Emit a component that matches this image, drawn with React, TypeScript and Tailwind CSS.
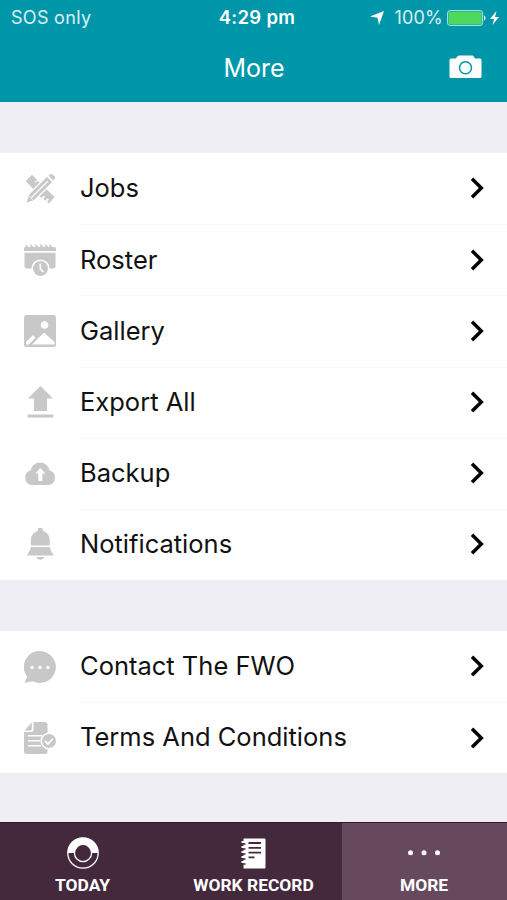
import React from 'react';

const iconClass = 'h-8 w-8 shrink-0 text-[#c8c8c8]';

function JobsIcon() {
  return (
    <svg viewBox="0 0 32 32" className={iconClass} fill="currentColor">
      <path d="M2 8 8 2l4.500 4.500-2 2 1.200 1.200 2-2L30.500 24 25 30.500l-2-2 2-2-1.300-1.300-2.500 2.500-2-2 2-2-1.200-1.200-2.500 2.500L2 8Z" />
      <path d="M2 8 8 2l5 5-1.500 1.500-1.500-1.500-1.500 1.500L10 10l-3 3-5-5Z" />
      <path d="M1.500 30.500 4.500 21.500 23 3l6 6L10.500 27.500 1.500 30.500Z" stroke="white" strokeWidth="1.300" />
      <path d="m24.500 2.700 1-1c1-1 2.400-1 3.400 0l1.400 1.400c1 1 1 2.400 0 3.400l-1 1-4.800-4.800Z" />
      <path d="M7.500 24.500 24 8" stroke="white" strokeWidth="1.100" />
      <path d="m4.500 22.500 5 5" stroke="white" strokeWidth=".800" />
    </svg>
  );
}

function RosterIcon() {
  return (
    <svg viewBox="0 0 32 32" className={iconClass} fill="currentColor">
      <path d="M0 7V4.500C0 3.500.700 3 1.500 3H2L1.500 0 4.500 3h2L6 -.500 9.500 3h2L11-.500 14.500 3h2L16-.500 19.500 3h2L21-.500 24.500 3h1L25.500-.500 28.500 3h2c.800 0 1.500.500 1.500 1.500V7H0Z" />
      <path d="M.500 8.800h31V22a2.500 2.500 0 0 1-2.500 2.500H3A2.500 2.500 0 0 1 .500 22V8.800Z" />
      <circle cx="16.500" cy="24.500" r="8.300" stroke="white" strokeWidth="1.600" />
      <path d="M16.300 19.500v5.300l3.200 3.200" fill="none" stroke="white" strokeWidth="1.600" />
    </svg>
  );
}

function GalleryIcon() {
  return (
    <svg viewBox="0 0 32 32" className={iconClass} fill="currentColor">
      <rect width="32" height="32" rx="2.500" />
      <circle cx="20.500" cy="10" r="3.800" fill="white" />
      <path d="M8 29.500 20 17.500l10.500 9.500v2.500H8ZM2 29.500V27l7-7 2.500 2.500-6.500 7H2Z" fill="white" />
    </svg>
  );
}

function ExportIcon() {
  return (
    <svg viewBox="0 0 32 32" className={iconClass} fill="currentColor">
      <path d="M16.500 0 29 12.500h-6V25H10V12.500H4L16.500 0Z" />
      <rect x="3.500" y="28.500" width="26" height="3" rx="1" />
    </svg>
  );
}

function BackupIcon() {
  return (
    <svg viewBox="0 0 32 32" className={iconClass} fill="currentColor">
      <path d="M7.500 28a7.500 7.500 0 0 1-1-14.600 9.800 9.800 0 0 1 19.200 0 7.500 7.500 0 0 1-1 14.600H7.500Z" />
      <path d="m16.300 11 5 5.500h-3V24h-4v-7.500h-3l5-5.500Z" fill="white" />
    </svg>
  );
}

function BellIcon() {
  return (
    <svg viewBox="0 0 32 32" className={iconClass} fill="currentColor">
      <path d="M6.800 17.500v-5c0-5 3-8.500 7-9.500V2a2.500 2.500 0 0 1 5 0v1c4 1 7 4.500 7 9.500v5h-19Z" />
      <path d="M6.800 19h19c.500 3 1.500 5 4 8.500h-27c2.500-3.500 3.500-5.500 4-8.500ZM12.300 29h8c-.800 1.800-2.200 2.700-4 2.700s-3.200-.900-4-2.700Z" />
    </svg>
  );
}

function ContactIcon() {
  return (
    <svg viewBox="0 0 32 32" className={iconClass} fill="currentColor">
      <path d="M16 0a16 16 0 1 1-7.500 30.200L.500 32l2.700-6.300A16 16 0 0 1 16 0Z" />
      <g fill="white">
        <circle cx="8" cy="16.500" r="1.700" />
        <circle cx="16" cy="16.500" r="1.700" />
        <circle cx="24" cy="16.500" r="1.700" />
      </g>
    </svg>
  );
}

function TermsIcon() {
  return (
    <svg viewBox="0 0 32 32" className={iconClass} fill="currentColor">
      <path d="M9.500 0H21a2.500 2.500 0 0 1 2.500 2.500v27A2.500 2.500 0 0 1 21 32H2.500A2.500 2.500 0 0 1 0 29.500V10h7a2.500 2.500 0 0 0 2.500-2.500V0ZM7.800.500v6.800c0 .700-.500 1.200-1.200 1.200H.500L7.800.500Z" />
      <path d="M4 13.700h14M4 18.700h12M4 23.700h13" stroke="white" strokeWidth="1.500" />
      <circle cx="25" cy="19" r="7.800" stroke="white" strokeWidth="1.600" />
      <path d="m21 19 3 3 5-5.500" fill="none" stroke="white" strokeWidth="1.800" />
    </svg>
  );
}

function TodayIcon() {
  return (
    <svg viewBox="0 0 32 32" className="h-8 w-8" fill="none" stroke="white">
      <circle cx="16" cy="16" r="15.200" strokeWidth="1.300" />
      <path d="M.800 16a15.200 15.200 0 0 1 30.400 0h-6.700a8.500 8.500 0 0 0-17 0H.800Z" fill="white" stroke="none" />
      <circle cx="16" cy="16" r="8.600" strokeWidth="1.300" />
    </svg>
  );
}

function RecordIcon() {
  return (
    <svg viewBox="0 0 32 32" className="h-8 w-8">
      <path d="M5.500 1.500h21a1 1 0 0 1 1 1v28a1 1 0 0 1-1 1h-21v-30Z" fill="white" />
      <path d="M10.500 6h12.500M10.500 10.800h12.500M10.500 15.600h12.500M10.500 20.400h6" stroke="#44283b" strokeWidth="1.800" />
      <path d="M3.500 5h4M3.500 10h4M3.500 15h4M3.500 20h4M3.500 25h4" stroke="white" strokeWidth="1.800" />
      <path d="M5 7h2.500M5 12h2.500M5 17h2.500M5 22h2.500M5 27h2.500" stroke="#44283b" strokeWidth="1.500" />
    </svg>
  );
}

function DotsIcon() {
  return (
    <svg viewBox="0 0 32 32" className="h-8 w-8" fill="white">
      <circle cx="2.500" cy="15.800" r="2.500" />
      <circle cx="16" cy="15.800" r="2.500" />
      <circle cx="29.500" cy="15.800" r="2.500" />
    </svg>
  );
}

const mainItems = [
  { label: 'Jobs', icon: JobsIcon },
  { label: 'Roster', icon: RosterIcon },
  { label: 'Gallery', icon: GalleryIcon },
  { label: 'Export All', icon: ExportIcon },
  { label: 'Backup', icon: BackupIcon },
  { label: 'Notifications', icon: BellIcon },
];

const infoItems = [
  { label: 'Contact The FWO', icon: ContactIcon },
  { label: 'Terms And Conditions', icon: TermsIcon },
];

const tabs = [
  { label: 'TODAY', icon: TodayIcon, active: false },
  { label: 'WORK RECORD', icon: RecordIcon, active: false },
  { label: 'MORE', icon: DotsIcon, active: true },
];

function MenuSection({ items, className }: { items: typeof mainItems; className: string }) {
  return (
    <section className={`flex shrink-0 flex-col bg-white ${className}`}>
      {items.map(({ label, icon: Icon }, i) => (
        <button key={label} type="button" className="flex min-h-0 flex-1 items-center pl-6 text-left">
          <Icon />
          <span
            className={`ml-6 flex flex-1 items-center justify-between self-stretch border-[#fafafa] pb-px pr-[23px] ${i > 0 ? 'border-t' : ''}`}
          >
            <span className="whitespace-nowrap text-[25.5px] text-[#111]">{label}</span>
            <svg viewBox="0 0 14 22" className="h-[22px] w-3.5" fill="none" stroke="black" strokeWidth="3.500">
              <path d="m2 1.700 9.300 9.300L2 20.300" />
            </svg>
          </span>
        </button>
      ))}
    </section>
  );
}

export default function App() {
  return (
    <div className="flex h-[900px] w-[507px] flex-col overflow-hidden bg-[#efeef5] font-['Inter','Liberation_Sans',sans-serif]">
      <header className="flex h-[102px] shrink-0 flex-col bg-[#0096a9] text-white">
        <div className="grid h-[35px] grid-cols-3 items-center pl-[11px] pr-2 text-[18px]">
          <span className="whitespace-nowrap tracking-[0.3px] text-white/85">SOS only</span>
          <span className="whitespace-nowrap pl-1 text-center text-[18.5px] font-semibold tracking-[0.3px]">4:29 pm</span>
          <div className="flex items-center justify-end">
            <svg viewBox="0 0 14 14" className="mr-2.5 h-3.5 w-3.5 shrink-0" fill="white">
              <path d="M14 0 9 14 7.500 6.800 0 5.500 14 0Z" />
            </svg>
            <span className="mr-1 tracking-[0.2px] text-white/85">100%</span>
            <svg viewBox="0 0 39 16" className="h-4 w-[39px] shrink-0">
              <rect x=".600" y=".600" width="35" height="14.800" rx="2.500" fill="none" stroke="#b9e4e9" strokeWidth="1" />
              <rect x="1.500" y="1.500" width="33.200" height="13" rx="1.500" fill="#4cd95f" />
              <path d="M37 5.500c2 .800 2 4.200 0 5v-5Z" fill="white" />
            </svg>
            <svg viewBox="0 0 9 14" className="ml-1 h-3.5 w-[9px] shrink-0" fill="white">
              <path d="M6.500 0 0 8h4L2.500 14 9 6H5l1.500-6Z" />
            </svg>
          </div>
        </div>
        <div className="grid flex-1 grid-cols-3 items-center pr-[25px]">
          <span />
          <h1 className="pl-[26px] text-center text-[25px]">More</h1>
          <button type="button" aria-label="Camera" className="justify-self-end pb-1">
            <svg viewBox="0 0 33 24" className="h-6 w-[33px]">
              <path d="M2 3.500h4.500c1.500-.500 1.500-3 3.500-3h13c2 0 2 2.500 3.500 3H31a1.500 1.500 0 0 1 1.500 1.500v16.500A1.500 1.500 0 0 1 31 23H2A1.500 1.500 0 0 1 .500 21.500V5A1.500 1.500 0 0 1 2 3.500Z" fill="white" />
              <circle cx="16.500" cy="12.700" r="6" fill="none" stroke="#0096a9" strokeWidth="1.500" />
            </svg>
          </button>
        </div>
      </header>

      <MenuSection items={mainItems} className="mt-[51px] h-[427px]" />
      <MenuSection items={infoItems} className="mt-[51px] h-[142px]" />

      <nav className="mt-auto grid h-[78px] shrink-0 grid-cols-[166px_176px_165px] border-t border-[#35182c] bg-[#44283b] font-['Roboto','Liberation_Sans',sans-serif] text-white">
        {tabs.map(({ label, icon: Icon, active }) => (
          <button
            key={label}
            type="button"
            className={`flex flex-col items-center pr-px pt-[14px] ${active ? 'bg-[#67495d]' : ''}`}
          >
            <Icon />
            <span className="mt-1 whitespace-nowrap text-[17.4px] font-bold leading-6">{label}</span>
          </button>
        ))}
      </nav>
    </div>
  );
}
